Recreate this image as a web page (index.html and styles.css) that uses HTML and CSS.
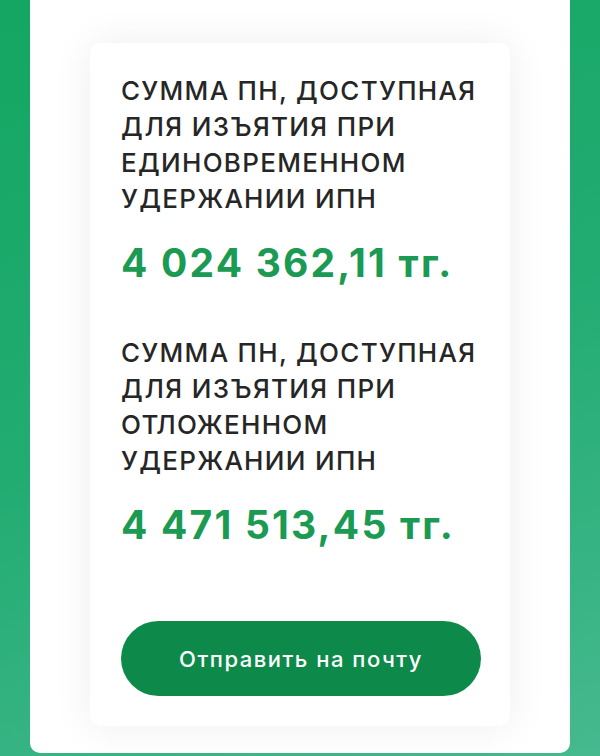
FILE: index.html
```html
<!DOCTYPE html>
<html lang="ru">
<head>
<meta charset="utf-8">
<link rel="stylesheet" href="styles.css">
</head>
<body>
<div class="panel">
  <div class="card">
    <section class="block">
      <h2 class="label">СУММА ПН, ДОСТУПНАЯ ДЛЯ ИЗЪЯТИЯ ПРИ ЕДИНОВРЕМЕННОМ УДЕРЖАНИИ ИПН</h2>
      <p class="amount">4 024 362,11 тг.</p>
    </section>
    <section class="block second">
      <h2 class="label">СУММА ПН, ДОСТУПНАЯ ДЛЯ ИЗЪЯТИЯ ПРИ ОТЛОЖЕННОМ УДЕРЖАНИИ ИПН</h2>
      <p class="amount">4 471 513,45 тг.</p>
    </section>
    <button class="send">Отправить на почту</button>
  </div>
</div>
</body>
</html>
```
FILE: styles.css
```css
html, body {
  margin: 0;
  height: 100%;
}
body {
  background: linear-gradient(160deg, #14a662 0%, #22ac72 50%, #46b98f 100%);
  font-family: Inter, "Noto Sans", sans-serif;
  overflow: hidden;
}
.panel {
  margin: 0 30px;
  height: 753px;
  background: #fff;
  border-radius: 0 0 10px 10px;
  padding: 43px 60px 0;
  box-sizing: border-box;
}
.card {
  background: #fff;
  border-radius: 10px;
  box-shadow: 0 0 40px rgba(20, 20, 60, 0.07);
  padding: 30px 10px 30px 31px;
  height: 683px;
  box-sizing: border-box;
  display: flex;
  flex-direction: column;
}
.label {
  margin: 0;
  font-size: 26px;
  line-height: 36px;
  font-weight: 500;
  color: #262626;
  letter-spacing: 1.3px;
  width: 375px;
}
.amount {
  margin: 23px 0 0;
  font-size: 39px;
  line-height: 46px;
  font-weight: 700;
  color: #1a9a52;
  letter-spacing: 2.2px;
}
.second {
  margin-top: 49px;
}
.send {
  margin-top: auto;
  height: 75px;
  width: 360px;
  border: none;
  border-radius: 38px;
  background: #0d8a4a;
  color: #fff;
  font-family: Inter, "Noto Sans", sans-serif;
  font-size: 22px;
  font-weight: 500;
  letter-spacing: 1.5px;
}
```
